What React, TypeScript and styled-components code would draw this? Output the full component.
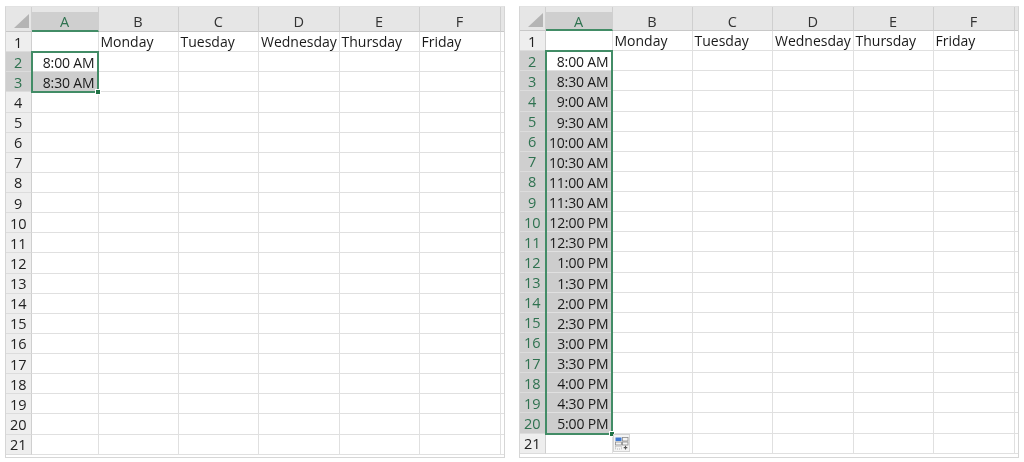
import React from "react";
import styled, { createGlobalStyle } from "styled-components";

const ROW = 20.13;

const Global = createGlobalStyle`
  html, body { margin: 0; padding: 0; background: #fff; width: 1024px; height: 462px; overflow: hidden; }
  body { font-family: "Open Sans", "Liberation Sans", sans-serif; color: #222; }
`;
const Page = styled.div`
  display: flex;
  gap: 14px;
  padding: 6px 0 0 5px;
  filter: blur(0.45px);
`;
const Sheet = styled.div<{ $head: number }>`
  position: relative;
  width: 500px;
  height: 451.5px;
  box-sizing: border-box;
  overflow: hidden;
  border: 1px solid #d6d6d6;
  border-top-color: #e2e2e2;
  display: grid;
  grid-template-columns: 25.5px 67px 80px 80.5px 80.5px 80px 81px 1fr;
  grid-template-rows: ${(p) => p.$head}px repeat(21, ${ROW}px) 1fr;
`;
const Corner = styled.div`
  background: #e6e6e6;
  border-right: 1px solid #d0d0d0;
  border-bottom: 1px solid #c8c8c8;
  display: flex;
  align-items: flex-end;
  justify-content: flex-end;
  padding: 0 2px 3px 0;
  box-sizing: border-box;
`;
const ColHead = styled.div<{ $active?: boolean }>`
  background: ${(p) => (p.$active ? "linear-gradient(#e6e6e6 5px, #cfcfcf 5px)" : "#e6e6e6")};
  color: ${(p) => (p.$active ? "#2f7250" : "#333")};
  border-right: 1px solid #cfcfcf;
  border-bottom: ${(p) => (p.$active ? "2px solid #428c66" : "1px solid #c8c8c8")};
  box-sizing: border-box;
  font-size: 14.5px;
  line-height: 1;
  padding-top: 8px;
  text-align: center;
`;
const Filler = styled.div`
  background: #e6e6e6;
  border-bottom: 1px solid #c8c8c8;
`;
const RowHead = styled.div<{ $active?: boolean }>`
  background: ${(p) => (p.$active ? "#cfcfcf" : "#eeeeee")};
  color: ${(p) => (p.$active ? "#2f7250" : "#222")};
  border-right: 1px solid #cfcfcf;
  border-bottom: 1px solid #dcdcdc;
  box-sizing: border-box;
  font-size: 14.5px;
  padding-top: 1px;
  display: flex;
  align-items: center;
  justify-content: center;
`;
const Cell = styled.div<{ $time?: boolean; $shade?: boolean }>`
  background: ${(p) => (p.$shade ? "#cdcdcd" : "#fff")};
  border-right: 1px solid #e0e0e0;
  border-bottom: 1px solid #e0e0e0;
  box-sizing: border-box;
  font-size: 14px;
  color: #1a1a1a;
  letter-spacing: ${(p) => (p.$time ? "-0.15px" : "0")};
  display: flex;
  align-items: center;
  justify-content: ${(p) => (p.$time ? "flex-end" : "flex-start")};
  padding: ${(p) => (p.$time ? "2px 3px 0 0" : "0 0 0 2px")};
  white-space: nowrap;
  overflow: visible;
`;
const EndCap = styled.div`
  border-bottom: 1px solid #e0e0e0;
  box-sizing: border-box;
  background: #fff;
`;
const Selection = styled.div<{ $rows: number; $head: number }>`
  position: absolute;
  left: 24.5px;
  top: ${(p) => p.$head + ROW - 1}px;
  width: 68.5px;
  height: ${(p) => p.$rows * ROW + 2}px;
  border: 2px solid #428c66;
  box-sizing: border-box;
  pointer-events: none;
`;
const Handle = styled.div`
  position: absolute;
  right: -4px;
  bottom: -4px;
  width: 6px;
  height: 6px;
  background: #217346;
  border: 0.5px solid #fff;
  box-sizing: border-box;
`;
const FillButton = styled.div`
  position: absolute;
  left: 93px;
  top: 427px;
  width: 17px;
  height: 18px;
  background: #f4f4f4;
  border: 1px solid #d4d4d4;
  box-sizing: border-box;
  display: flex;
  align-items: center;
  justify-content: center;
`;

const columns = ["A", "B", "C", "D", "E", "F"];
const days = ["", "Monday", "Tuesday", "Wednesday", "Thursday", "Friday"];
const allTimes = [
  "8:00 AM", "8:30 AM", "9:00 AM", "9:30 AM", "10:00 AM", "10:30 AM", "11:00 AM", "11:30 AM", "12:00 PM",
  "12:30 PM", "1:00 PM", "1:30 PM", "2:00 PM", "2:30 PM", "3:00 PM", "3:30 PM", "4:00 PM", "4:30 PM", "5:00 PM",
];

const FillIcon = () => (
  <svg width="14" height="13" viewBox="0 0 14 13">
    <rect x="0.5" y="0.5" width="6" height="3.5" fill="#3f78d0" />
    <rect x="7.5" y="0.5" width="5.5" height="3.5" fill="none" stroke="#8a8a8a" strokeWidth="0.8" />
    <rect x="0.5" y="5" width="6" height="3" fill="none" stroke="#8a8a8a" strokeWidth="0.8" />
    <rect x="7.5" y="5" width="5.5" height="3" fill="none" stroke="#8a8a8a" strokeWidth="0.8" />
    <path d="M0.5 9.5h6v2.5h-6z" fill="none" stroke="#9a9a9a" strokeWidth="0.7" strokeDasharray="1 1" />
    <path d="M10.5 8.8v3.6M8.7 10.6h3.6" stroke="#555" strokeWidth="1.1" />
  </svg>
);

const Spreadsheet = ({ times, head, fillButton }: { times: string[]; head: number; fillButton?: boolean }) => (
  <Sheet $head={head}>
    <Corner>
      <svg width="15" height="14" viewBox="0 0 15 14">
        <path d="M15 0V14H0Z" fill="#b4b4b4" />
      </svg>
    </Corner>
    {columns.map((c, i) => (
      <ColHead key={c} $active={i === 0}>{c}</ColHead>
    ))}
    <Filler />
    {Array.from({ length: 21 }, (_, r) => {
      const time = r >= 1 ? times[r - 1] : undefined;
      return (
        <React.Fragment key={r}>
          <RowHead $active={!!time}>{r + 1}</RowHead>
          {columns.map((c, i) =>
            i === 0 ? (
              <Cell key={c} $time $shade={!!time && r > 1}>{time}</Cell>
            ) : (
              <Cell key={c}>{r === 0 ? days[i] : ""}</Cell>
            )
          )}
          <EndCap />
        </React.Fragment>
      );
    })}
    <Selection $rows={times.length} $head={head}>
      <Handle />
    </Selection>
    {fillButton && (
      <FillButton>
        <FillIcon />
      </FillButton>
    )}
  </Sheet>
);

export default function App() {
  return (
    <>
      <Global />
      <Page>
        <Spreadsheet times={allTimes.slice(0, 2)} head={25} />
        <Spreadsheet times={allTimes} head={24} fillButton />
      </Page>
    </>
  );
}
